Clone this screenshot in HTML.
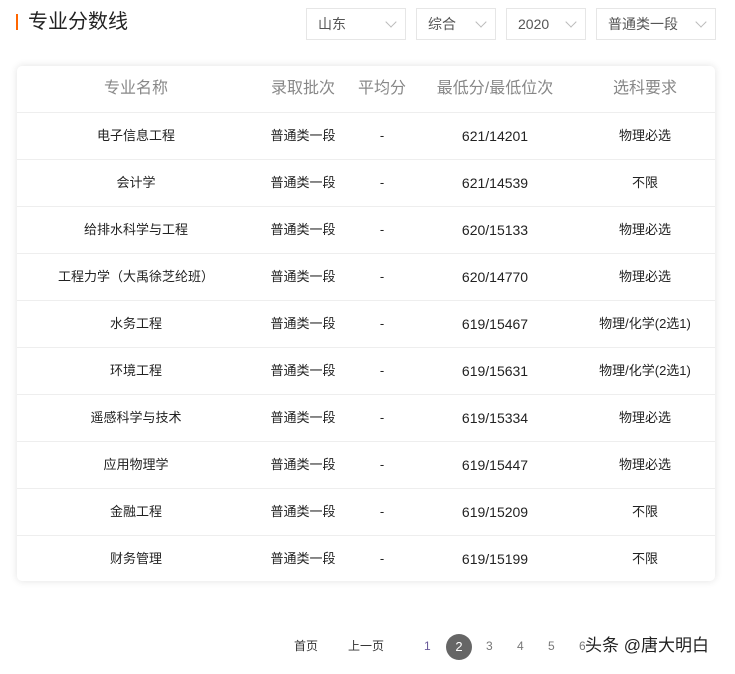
<!DOCTYPE html><html><head><meta charset="utf-8"><style>
body{margin:0;width:735px;height:674px;background:#fff;font-family:"Liberation Sans","Noto Sans CJK SC",sans-serif;position:relative;overflow:hidden}
.t{position:absolute;left:16px;top:10px;font-size:20px;color:#222;line-height:24px}
.t:before{content:"";position:absolute;left:0;top:4px;width:2px;height:16px;background:#f60}
.t span{margin-left:12px}
.s{position:absolute;top:8px;border:1px solid #e6e6e6;font-size:14px;color:#555;line-height:30px;box-sizing:border-box;height:32px;padding-left:11px}
.s i{position:absolute;right:10px;top:9px;width:7px;height:7px;border-right:1px solid #bbb;border-bottom:1px solid #bbb;transform:rotate(45deg)}
.card{position:absolute;left:17px;top:66px;width:698px;height:515px;border-radius:5px;box-shadow:0 0 8px rgba(0,0,0,.12)}
.r{position:absolute;left:0;width:698px;height:47px;border-top:1px solid #eee;font-size:13px;color:#222;line-height:46px}
.r div{position:absolute;top:0;text-align:center;transform:translateX(-50%);white-space:nowrap}
.r div.d{font-size:14px}
.h{border-top:none;font-size:16px;color:#888}
.p{position:absolute;top:636px;font-size:12px;color:#333;line-height:20px}
.n{color:#777}
</style></head><body>
<div class="t"><span>专业分数线</span></div>
<div class="s" style="left:306px;width:100px">山东<i></i></div>
<div class="s" style="left:416px;width:80px">综合<i></i></div>
<div class="s" style="left:506px;width:80px">2020<i></i></div>
<div class="s" style="left:596px;width:120px">普通类一段<i></i></div>
<div class="card">
<div class="r h" style="top:0"><div style="left:119px">专业名称</div><div style="left:286px">录取批次</div><div style="left:365px">平均分</div><div style="left:478px">最低分/最低位次</div><div style="left:628px">选科要求</div></div>
<div class="r" style="top:46px"><div style="left:119px">电子信息工程</div><div style="left:286px">普通类一段</div><div style="left:365px">-</div><div class="d" style="left:478px">621/14201</div><div style="left:628px">物理必选</div></div>
<div class="r" style="top:93px"><div style="left:119px">会计学</div><div style="left:286px">普通类一段</div><div style="left:365px">-</div><div class="d" style="left:478px">621/14539</div><div style="left:628px">不限</div></div>
<div class="r" style="top:140px"><div style="left:119px">给排水科学与工程</div><div style="left:286px">普通类一段</div><div style="left:365px">-</div><div class="d" style="left:478px">620/15133</div><div style="left:628px">物理必选</div></div>
<div class="r" style="top:187px"><div style="left:119px">工程力学（大禹徐芝纶班）</div><div style="left:286px">普通类一段</div><div style="left:365px">-</div><div class="d" style="left:478px">620/14770</div><div style="left:628px">物理必选</div></div>
<div class="r" style="top:234px"><div style="left:119px">水务工程</div><div style="left:286px">普通类一段</div><div style="left:365px">-</div><div class="d" style="left:478px">619/15467</div><div style="left:628px">物理/化学(2选1)</div></div>
<div class="r" style="top:281px"><div style="left:119px">环境工程</div><div style="left:286px">普通类一段</div><div style="left:365px">-</div><div class="d" style="left:478px">619/15631</div><div style="left:628px">物理/化学(2选1)</div></div>
<div class="r" style="top:328px"><div style="left:119px">遥感科学与技术</div><div style="left:286px">普通类一段</div><div style="left:365px">-</div><div class="d" style="left:478px">619/15334</div><div style="left:628px">物理必选</div></div>
<div class="r" style="top:375px"><div style="left:119px">应用物理学</div><div style="left:286px">普通类一段</div><div style="left:365px">-</div><div class="d" style="left:478px">619/15447</div><div style="left:628px">物理必选</div></div>
<div class="r" style="top:422px"><div style="left:119px">金融工程</div><div style="left:286px">普通类一段</div><div style="left:365px">-</div><div class="d" style="left:478px">619/15209</div><div style="left:628px">不限</div></div>
<div class="r" style="top:469px"><div style="left:119px">财务管理</div><div style="left:286px">普通类一段</div><div style="left:365px">-</div><div class="d" style="left:478px">619/15199</div><div style="left:628px">不限</div></div>
</div>
<div class="p" style="left:294px">首页</div>
<div class="p" style="left:348px">上一页</div>
<div class="p n" style="left:424px;color:#6a5a9a">1</div>
<div style="position:absolute;left:446px;top:634px;width:26px;height:26px;border-radius:50%;background:#666;color:#fff;font-size:13px;line-height:26px;text-align:center">2</div>
<div class="p n" style="left:486px">3</div>
<div class="p n" style="left:517px">4</div>
<div class="p n" style="left:548px">5</div>
<div class="p n" style="left:579px">6</div>
<div style="position:absolute;left:585px;top:634px;font-size:17px;color:#222;line-height:24px;background:rgba(255,255,255,.6)">头条 @唐大明白</div>
</body></html>
